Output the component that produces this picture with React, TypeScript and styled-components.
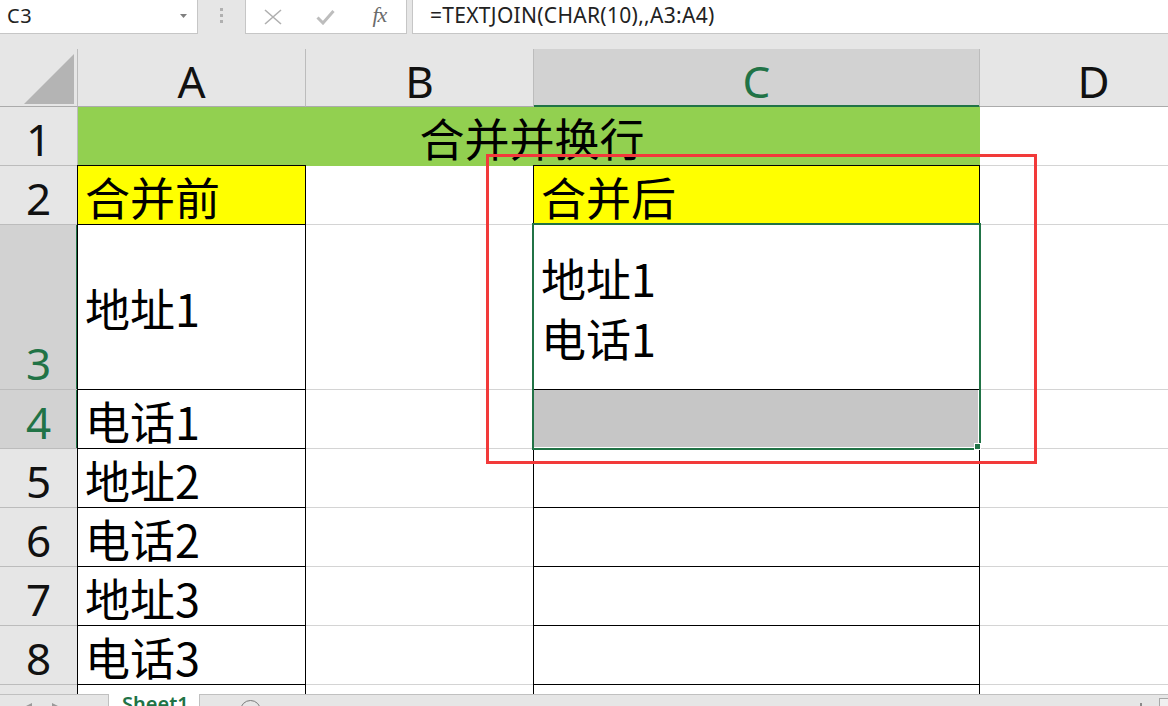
import React from "react";
import styled, { createGlobalStyle, css } from "styled-components";

const GREEN = "#217346";
const GRID = "#d4d4d4";
const HEAD_LINE = "#bcbcbc";

const GlobalStyle = createGlobalStyle`
  html, body { margin: 0; padding: 0; background: #ffffff; }
  body { font-family: "Noto Sans", "Noto Sans CJK SC", sans-serif; overflow: hidden; }
  #root { width: 1168px; height: 706px; }
`;

const Window = styled.div`
  width: 1168px;
  height: 706px;
  display: flex;
  flex-direction: column;
  background: #e6e6e6;
  overflow: hidden;
`;

/* ---------- formula bar ---------- */
const FormulaBar = styled.div`
  flex: none;
  height: 34px;
  display: flex;
  align-items: stretch;
`;

const NameBox = styled.div`
  width: 198px;
  flex: none;
  box-sizing: border-box;
  background: #fff;
  border-right: 1px solid #c6c6c6;
  border-bottom: 1px solid #c6c6c6;
  display: flex;
  align-items: center;
  justify-content: space-between;
  padding: 0 10px 2px 7px;
  font-size: 20px;
  letter-spacing: 0.5px;
  color: #222;
`;

const Grip = styled.div`
  width: 47px;
  flex: none;
  display: flex;
  flex-direction: column;
  align-items: center;
  justify-content: center;
  gap: 3px;
  padding-bottom: 3px;
  box-sizing: border-box;
`;

const GripDot = styled.span`
  width: 3px;
  height: 3px;
  background: #b0b0b0;
`;

const FxBox = styled.div`
  width: 162px;
  flex: none;
  box-sizing: border-box;
  background: #fff;
  border: 1px solid #c6c6c6;
  border-top: none;
  display: grid;
  grid-template-columns: repeat(3, 1fr);
  align-items: center;
  justify-items: center;
`;

const FxText = styled.span`
  font-family: "Liberation Serif", "DejaVu Serif", serif;
  font-style: italic;
  font-size: 22px;
  color: #6b6b6b;
  letter-spacing: -1px;
  padding-bottom: 3px;
`;

const FormulaInput = styled.div`
  flex: 1;
  margin-left: 5px;
  box-sizing: border-box;
  background: #fff;
  border-left: 1px solid #c6c6c6;
  border-bottom: 1px solid #c6c6c6;
  display: flex;
  align-items: center;
  padding: 0 0 3px 17px;
  font-size: 21px;
  letter-spacing: 0.3px;
  color: #222;
  white-space: nowrap;
`;

/* ---------- sheet grid ---------- */
const Sheet = styled.div`
  position: relative;
  flex: 1;
  margin-top: 15px;
  overflow: hidden;
  background: #fff;
  display: grid;
  grid-template-columns: 78px 228px 228px 446px 228px;
  grid-template-rows: 58px 59px 59px 165px repeat(6, 59px);
  align-content: start;
`;

const Corner = styled.div`
  box-sizing: border-box;
  background: #e6e6e6;
  border-right: 1px solid ${HEAD_LINE};
  border-bottom: 1px solid #ababab;
  display: flex;
  align-items: flex-end;
  justify-content: flex-end;
  padding: 0 3px 2px 0;
`;

const ColHeader = styled.div<{ $sel?: boolean }>`
  box-sizing: border-box;
  background: ${(p) => (p.$sel ? "#d2d2d2" : "#e6e6e6")};
  color: ${(p) => (p.$sel ? GREEN : "#111")};
  border-right: 1px solid ${HEAD_LINE};
  border-bottom: 1px solid ${(p) => (p.$sel ? GREEN : "#ababab")};
  ${(p) => p.$sel && css`box-shadow: inset 0 -1px 0 ${GREEN};`}
  display: flex;
  align-items: center;
  justify-content: center;
  padding-top: 6px;
  font-family: "Noto Sans", sans-serif;
  font-size: 44px;
  line-height: 44px;
`;

const RowHeader = styled.div<{ $sel?: boolean }>`
  box-sizing: border-box;
  background: ${(p) => (p.$sel ? "#d2d2d2" : "#e6e6e6")};
  color: ${(p) => (p.$sel ? GREEN : "#111")};
  border-right: 1px solid ${(p) => (p.$sel ? GREEN : HEAD_LINE)};
  border-bottom: 1px solid ${HEAD_LINE};
  ${(p) => p.$sel && css`box-shadow: inset -1px 0 0 ${GREEN};`}
  display: flex;
  align-items: flex-end;
  justify-content: center;
  padding-bottom: 4px;
  font-family: "Noto Sans", sans-serif;
  font-size: 44px;
  line-height: 44px;
`;

type CellProps = {
  $fill?: string;
  $black?: boolean;
  $v?: "center" | "bottom";
  $span?: number;
  $center?: boolean;
  $lineColor?: string;
  $innerWhite?: boolean;
  $row?: number;
  $col?: number;
};

const Cell = styled.div<CellProps>`
  box-sizing: border-box;
  min-width: 0;
  display: flex;
  flex-direction: column;
  justify-content: ${(p) => (p.$v === "center" ? "center" : "flex-end")};
  align-items: ${(p) => (p.$center ? "center" : "flex-start")};
  padding: ${(p) => (p.$v === "center" ? "2px 0 0 7px" : "0 0 4px 7px")};
  background: ${(p) => p.$fill ?? "#fff"};
  border-right: 1px solid ${(p) => (p.$black ? "#000" : p.$lineColor ?? GRID)};
  border-bottom: 1px solid ${(p) => (p.$black ? "#000" : p.$lineColor ?? GRID)};
  ${(p) => p.$span && css`grid-column: span ${p.$span};`}
  ${(p) => p.$row && css`grid-row: ${p.$row};`}
  ${(p) => p.$col && css`grid-column: ${p.$col};`}
  ${(p) =>
    p.$black &&
    css`
      box-shadow: -1px 0 0 #000, 0 -1px 0 #000, -1px -1px 0 #000
        ${p.$innerWhite ? ", inset -1px -1px 0 #fff" : ""};
    `}
  font-family: "Noto Sans CJK SC", "Noto Sans", sans-serif;
  font-size: 45px;
  line-height: 46px;
  color: #000;
  white-space: nowrap;
`;

const WrapLine = styled.div`
  line-height: 60px;
`;

const SelectionFrame = styled.div`
  grid-column: 4;
  grid-row: 4 / 6;
  margin: -2px -1px -1px -2px;
  border: 2px solid ${GREEN};
  position: relative;
  z-index: 2;
  pointer-events: none;
`;

const FillHandle = styled.div`
  position: absolute;
  right: -2px;
  bottom: -2px;
  width: 7px;
  height: 7px;
  box-sizing: border-box;
  background: ${GREEN};
  border: 1px solid #fff;
`;

const Annotation = styled.div`
  position: absolute;
  left: 486px;
  top: 105px;
  width: 551px;
  height: 310px;
  box-sizing: border-box;
  border: 3px solid #f23a3a;
  z-index: 3;
  pointer-events: none;
`;

/* ---------- sheet tabs ---------- */
const TabBar = styled.div`
  flex: none;
  height: 12px;
  display: flex;
  overflow: hidden;
  background: #e6e6e6;
`;

const NavArea = styled.div`
  width: 108px;
  flex: none;
  box-sizing: border-box;
  border-top: 1px solid #c0c0c0;
  display: flex;
  align-items: flex-start;
  gap: 20px;
  padding: 8px 0 0 26px;
`;

const SheetTab = styled.div`
  width: 92px;
  flex: none;
  box-sizing: border-box;
  background: #fff;
  border-left: 1px solid #c0c0c0;
  border-right: 1px solid #c0c0c0;
  padding-left: 13px;
  font-family: "Noto Sans", sans-serif;
  font-weight: 600;
  font-size: 20px;
  line-height: 20px;
  color: ${GREEN};
  overflow: hidden;
`;

const TabRest = styled.div`
  flex: 1;
  box-sizing: border-box;
  border-top: 1px solid #c0c0c0;
  display: flex;
  align-items: flex-start;
`;

const NewSheetButton = styled.div`
  margin: 5px 0 0 40px;
  width: 21px;
  height: 21px;
  flex: none;
  box-sizing: border-box;
  border: 1.5px solid #7a7a7a;
  border-radius: 50%;
`;

const SplitMark = styled.div`
  margin: 8px 0 0 auto;
  width: 2px;
  height: 6px;
  background: #8a8a8a;
`;

const ScrollStart = styled.div`
  margin: 3px 0 0 17px;
  width: 9px;
  height: 12px;
  box-sizing: border-box;
  border-left: 1px solid #a8a8a8;
  border-top: 1px solid #a8a8a8;
  background: #f0f0f0;
`;

const rowsBelow: { n: number; a: string }[] = [
  { n: 5, a: "地址2" },
  { n: 6, a: "电话2" },
  { n: 7, a: "地址3" },
  { n: 8, a: "电话3" },
  { n: 9, a: "" },
];

export default function App() {
  return (
    <>
      <GlobalStyle />
      <Window>
        <FormulaBar>
          <NameBox>
            <span>C3</span>
            <svg width="7" height="4" viewBox="0 0 7 4">
              <polygon points="0,0 7,0 3.5,4" fill="#7f7f7f" />
            </svg>
          </NameBox>
          <Grip>
            <GripDot />
            <GripDot />
            <GripDot />
          </Grip>
          <FxBox>
            <svg width="18" height="16" viewBox="0 0 18 16">
              <path d="M1 1 L17 15 M17 1 L1 15" stroke="#b0b0b0" strokeWidth="1.6" fill="none" />
            </svg>
            <svg width="19" height="16" viewBox="0 0 19 16">
              <path d="M1.5 8.5 L7 14 L17.5 2" stroke="#bdbdbd" strokeWidth="3" fill="none" />
            </svg>
            <FxText>fx</FxText>
          </FxBox>
          <FormulaInput>=TEXTJOIN(CHAR(10),,A3:A4)</FormulaInput>
        </FormulaBar>

        <Sheet>
          <Corner>
            <svg width="50" height="50" viewBox="0 0 50 50">
              <polygon points="50,0 50,50 0,50" fill="#b4b4b4" />
            </svg>
          </Corner>
          <ColHeader>A</ColHeader>
          <ColHeader>B</ColHeader>
          <ColHeader $sel>C</ColHeader>
          <ColHeader>D</ColHeader>

          <RowHeader>1</RowHeader>
          <Cell $span={3} $fill="#92d050" $lineColor="#92d050" $center>
            合并并换行
          </Cell>
          <Cell />

          <RowHeader>2</RowHeader>
          <Cell $fill="#ffff00" $black>
            合并前
          </Cell>
          <Cell />
          <Cell $fill="#ffff00" $black>
            合并后
          </Cell>
          <Cell />

          <RowHeader $sel>3</RowHeader>
          <Cell $black $v="center">
            地址1
          </Cell>
          <Cell />
          <Cell $black $v="center" $row={4} $col={4}>
            <WrapLine>地址1</WrapLine>
            <WrapLine>电话1</WrapLine>
          </Cell>
          <Cell />

          <RowHeader $sel>4</RowHeader>
          <Cell $black>电话1</Cell>
          <Cell />
          <Cell $black $fill="#c6c6c6" $innerWhite $row={5} $col={4} />
          <Cell />

          {rowsBelow.map((r) => (
            <React.Fragment key={r.n}>
              <RowHeader>{r.n}</RowHeader>
              <Cell $black>{r.a}</Cell>
              <Cell />
              <Cell $black />
              <Cell />
            </React.Fragment>
          ))}

          <SelectionFrame>
            <FillHandle />
          </SelectionFrame>
          <Annotation />
        </Sheet>

        <TabBar>
          <NavArea>
            <svg width="6" height="6" viewBox="0 0 6 6">
              <polygon points="6,0 6,6 0,3" fill="#9a9a9a" />
            </svg>
            <svg width="6" height="6" viewBox="0 0 6 6">
              <polygon points="0,0 0,6 6,3" fill="#9a9a9a" />
            </svg>
          </NavArea>
          <SheetTab>Sheet1</SheetTab>
          <TabRest>
            <NewSheetButton />
            <SplitMark />
            <ScrollStart />
          </TabRest>
        </TabBar>
      </Window>
    </>
  );
}
